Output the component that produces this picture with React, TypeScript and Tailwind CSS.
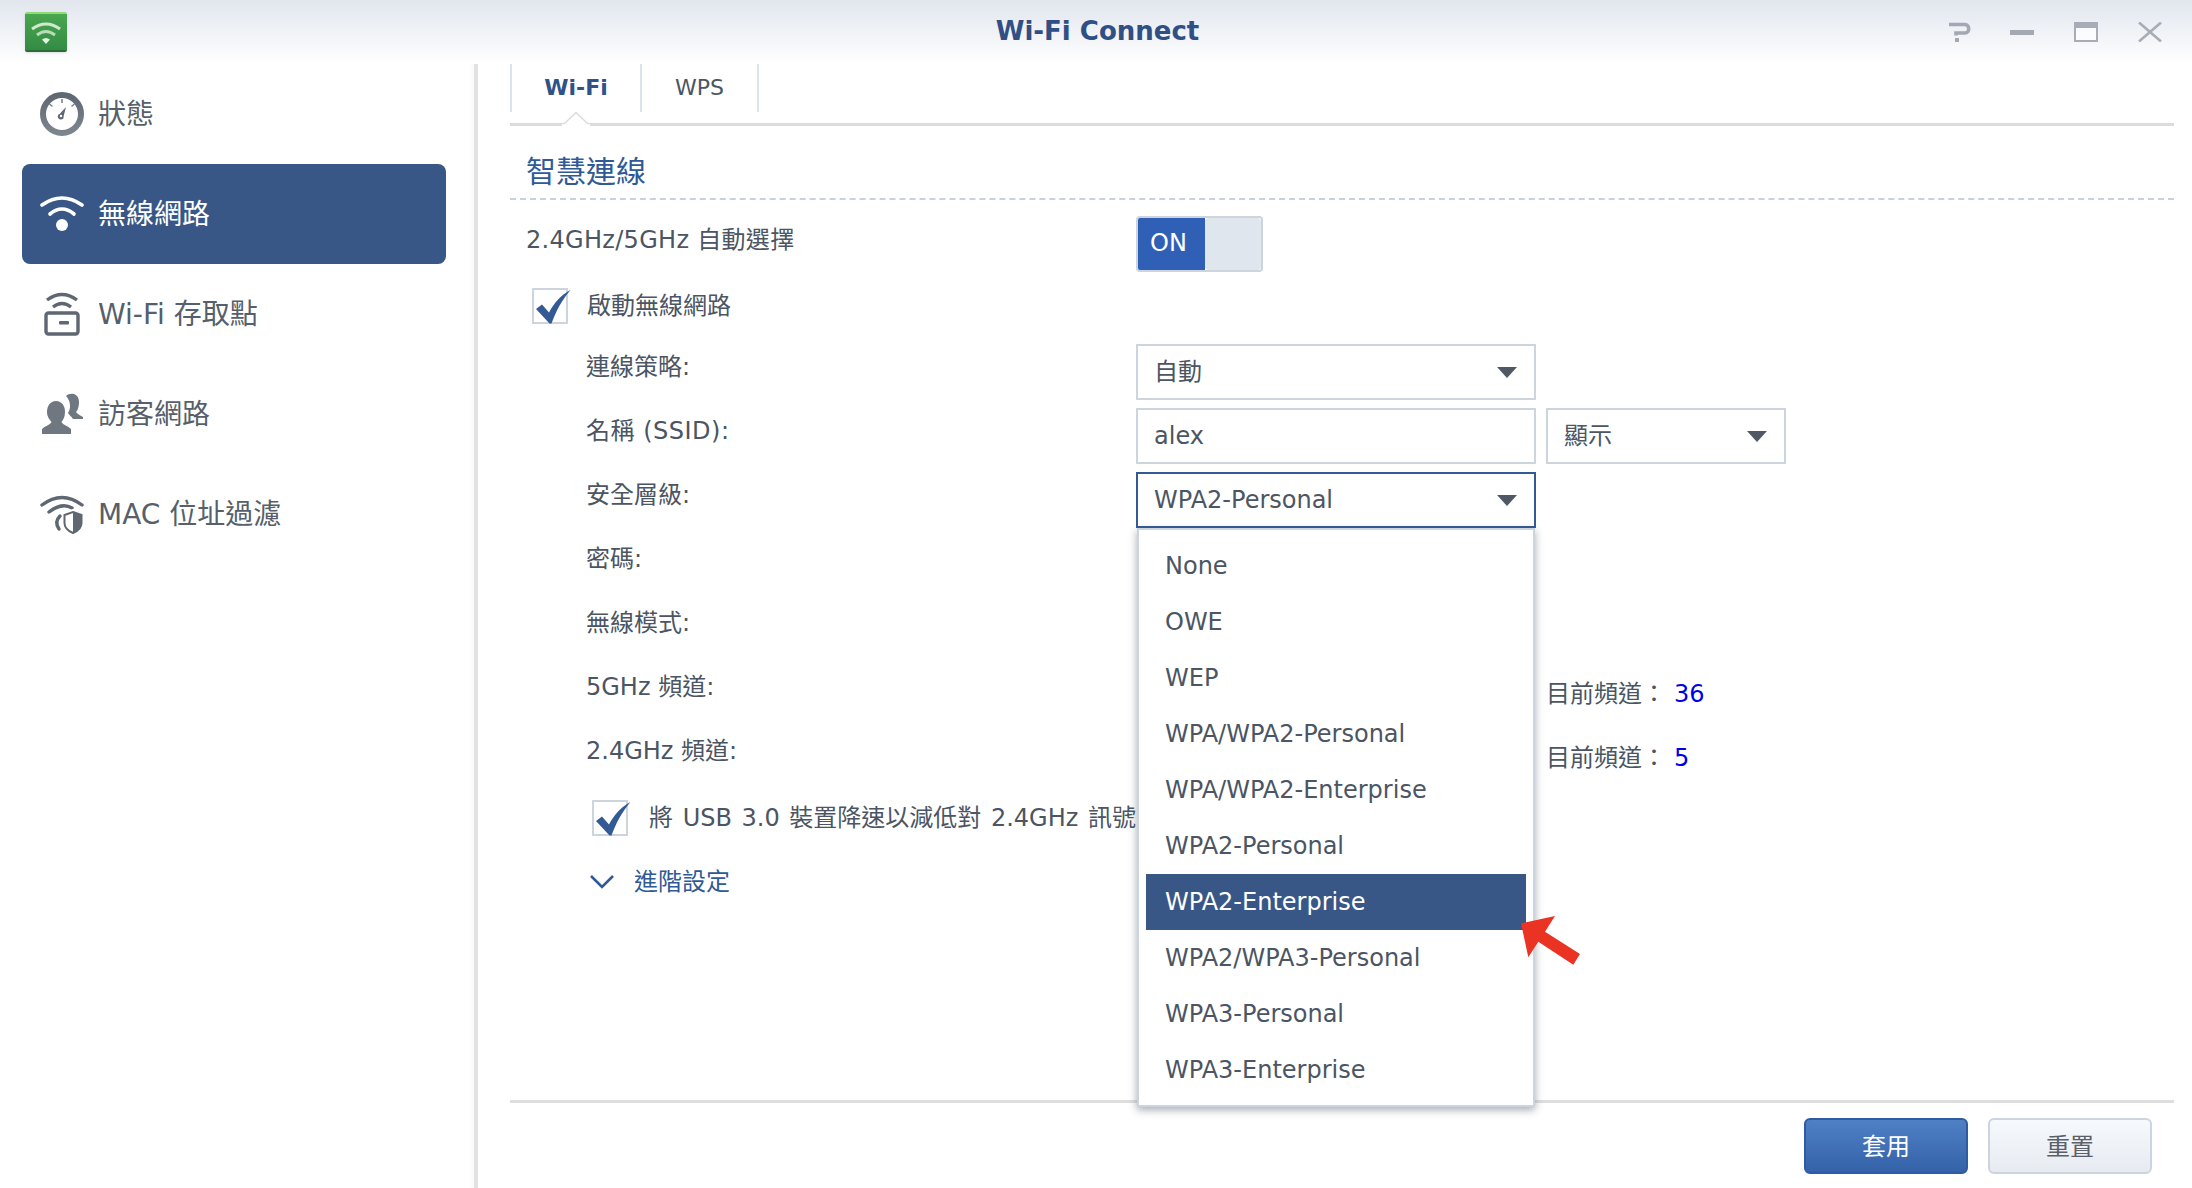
import React from "react";

const Caret = () => (
  <svg width="20" height="11" viewBox="0 0 20 11" className="shrink-0">
    <path d="M0 0H20L10 11Z" fill="#4f5863" />
  </svg>
);

const Check = () => (
  <svg width="40" height="40" viewBox="0 0 40 40" className="absolute left-0 top-[-2px]">
    <path d="M4 23L10 18.5L17 26.5C22 17 29 9 38.5 4C30 14 24 25 19.5 37.5H17.5Z" fill="#345a96" />
  </svg>
);

const CheckBox = () => (
  <div className="relative h-9 w-9 shrink-0 border-2 border-[#ccd4de] bg-white">
    <div className="absolute left-[-2px] top-[-2px] h-9 w-9">
      <Check />
    </div>
  </div>
);

const GaugeIcon = () => (
  <svg width="44" height="44" viewBox="0 0 44 44">
    <defs>
      <linearGradient id="g1" x1="0" y1="0" x2="0" y2="1">
        <stop offset="0" stopColor="#5f6772" />
        <stop offset="1" stopColor="#7d858f" />
      </linearGradient>
    </defs>
    <circle cx="22" cy="22" r="19" fill="none" stroke="url(#g1)" strokeWidth="6" />
    <path d="M22 7V11M9.5 12L12.5 14.5M34.5 12L31.5 14.5" stroke="#7d858f" strokeWidth="1.6" />
    <path d="M26 15L23.6 24.2A2.9 2.9 0 1 1 19.6 22Z" fill="#5f6772" />
    <circle cx="21" cy="24" r="1.2" fill="#fff" />
  </svg>
);

const WifiIcon = () => (
  <svg width="44" height="44" viewBox="0 0 44 44">
    <g fill="none" stroke="#fff" strokeWidth="3.6" strokeLinecap="round">
      <path d="M2 13Q22 -1 42 13" />
      <path d="M10 22Q22 12 34 22" />
    </g>
    <circle cx="22" cy="33" r="6" fill="#fff" />
  </svg>
);

const ApIcon = () => (
  <svg width="44" height="44" viewBox="0 0 44 44">
    <g fill="none" stroke="#5f6772" strokeWidth="3.4">
      <path d="M7 8Q22 -3 37 8" />
      <path d="M13 15Q22 8 31 15" />
      <rect x="6" y="21" width="32" height="21" rx="2.5" />
    </g>
    <rect x="19" y="29" width="10" height="3.5" rx="1" fill="#5f6772" />
  </svg>
);

const GuestIcon = () => (
  <svg width="44" height="44" viewBox="0 0 44 44">
    <path d="M26 4C30 0 39 1 39 10C39 14 38 18 36 20C37 22 40 23 43 25V27H33C31 24 29 23 28 21C31 17 31 9 26 4Z" fill="#6f7781" />
    <path d="M16 9C22 9 25 14 25 20C25 25 23 28 21.5 30C23 33 28 34 31 37V42H2V37C5 34 10 33 11.5 30C10 28 7 25 7 20C7 14 10 9 16 9Z" fill="#6f7781" />
  </svg>
);

const MacIcon = () => (
  <svg width="44" height="44" viewBox="0 0 44 44">
    <g fill="none" stroke="#5f6772" strokeWidth="3.4" strokeLinecap="round">
      <path d="M2 13Q22 -2 42 13" />
      <path d="M9 20Q22 10 32 16" />
      <path d="M19 37Q14 30 20 24" />
    </g>
    <path d="M33 17L44 21V31C44 37 39 41 33 43C27 41 22 37 22 31V21Z" fill="#fff" />
    <path d="M33 20L41.5 23V31C41.5 36 38 39 33 41C28 39 24.5 36 24.5 31V23Z" fill="none" stroke="#5f6772" strokeWidth="2" />
    <path d="M33 20L41.5 23V31C41.5 36 38 39 33 41Z" fill="#5f6772" />
  </svg>
);

const Logo = () => (
  <div className="flex h-10 w-[42px] items-center justify-center rounded-[2px] border-t-2 border-b-2 border-t-[#8fdc72] border-b-[#2c6b35] bg-gradient-to-b from-[#4aa650] to-[#338c44] shadow-sm">
    <svg width="30" height="24" viewBox="0 0 30 24">
      <g fill="none" stroke="#cfe9cc" strokeWidth="3">
        <path d="M1 9Q15 -1 29 9" />
        <path d="M6 15Q15 8 24 15" opacity="0.85" />
      </g>
      <path d="M11 19.5Q15 16.5 19 19.5L15 24Z" fill="#e4f3e2" />
    </svg>
  </div>
);

const WindowControls = () => (
  <div className="flex items-center">
    <svg width="24" height="20" viewBox="0 0 24 20" className="mr-[38px]">
      <path d="M1 2.5H17C22 2.5 22 11 17 11H8V13.5" fill="none" stroke="#a3a8b3" strokeWidth="3.5" />
      <rect x="7" y="16" width="4" height="4" fill="#a3a8b3" />
    </svg>
    <div className="mr-10 h-[5px] w-6 bg-[#a3a8b3]" />
    <div className="mr-10 flex h-5 w-6 flex-col border-2 border-t-[6px] border-[#a7acb7] bg-white/70" />
    <svg width="24" height="20" viewBox="0 0 24 20">
      <path d="M1 0.5L23 19.5M23 0.5L1 19.5" stroke="#a7acb7" strokeWidth="2.6" />
    </svg>
  </div>
);

const nav = [
  { label: "狀態", icon: <GaugeIcon /> },
  { label: "無線網路", icon: <WifiIcon />, active: true },
  { label: "Wi-Fi 存取點", icon: <ApIcon /> },
  { label: "訪客網路", icon: <GuestIcon /> },
  { label: "MAC 位址過濾", icon: <MacIcon /> },
];

const options = [
  "None",
  "OWE",
  "WEP",
  "WPA/WPA2-Personal",
  "WPA/WPA2-Enterprise",
  "WPA2-Personal",
  "WPA2-Enterprise",
  "WPA2/WPA3-Personal",
  "WPA3-Personal",
  "WPA3-Enterprise",
];

const Select = ({ value, width, focus }: { value: string; width: string; focus?: boolean }) => (
  <div
    className={`flex h-14 items-center justify-between border-2 bg-white pl-4 pr-[17px] ${width} ${
      focus ? "border-[#345a96]" : "border-[#ccd4de]"
    }`}
  >
    <span>{value}</span>
    <Caret />
  </div>
);

const Row = ({ label, wide, children }: { label: string; wide?: boolean; children?: React.ReactNode }) => (
  <div className="flex h-14">
    <div className={`w-[626px] pt-[7px] pl-[76px] ${wide ? "tracking-[0.5px]" : ""}`}>{label}</div>
    {children}
  </div>
);

const Channel = ({ value }: { value: string }) => (
  <div className="ml-[410px] flex items-center pt-[4px]">
    <span>目前頻道：</span>
    <span className="ml-[8px] text-[#0000e6]">{value}</span>
  </div>
);

export default function App() {
  return (
    <div className="flex h-[1188px] w-[2192px] flex-col overflow-hidden bg-white text-[24px] leading-8 text-[#4b5563] [font-family:'DejaVu_Sans','Noto_Sans_CJK_TC',sans-serif]">
      <header className="relative flex h-16 shrink-0 items-center justify-between bg-gradient-to-b from-[#e1e6ee] to-[#ffffff] pr-[30px] pl-[25px]">
        <Logo />
        <div className="absolute inset-x-0 top-[15px] pl-[3px] text-center text-[26px] font-bold text-[#2f4f85]">Wi-Fi Connect</div>
        <WindowControls />
      </header>

      <div className="flex min-h-0 flex-1">
        <aside className="w-[478px] shrink-0 border-r-[4px] border-[#e2e2e2] pl-[22px] shadow-[inset_-6px_0_6px_-6px_rgba(0,0,0,0.06)]">
          {nav.map((item) => (
            <div
              key={item.label}
              className={`flex h-[100px] w-[424px] items-center gap-[14px] rounded-lg pl-[18px] text-[28px] ${
                item.active ? "bg-[#385787] text-white" : "text-[#565f6b]"
              }`}
            >
              {item.icon}
              <span className="pt-[2px]">{item.label}</span>
            </div>
          ))}
        </aside>

        <main className="ml-8 flex min-w-0 flex-1 flex-col pr-[18px]">
          <div className="relative flex h-[62px] shrink-0 border-b-[3px] border-[#dcdcdc] text-[22px]">
            <div className="mb-[11px] flex w-[132px] items-center justify-center border-x-2 border-[#dde3ec] font-bold text-[#2f5288]">Wi-Fi</div>
            <div className="mb-[11px] flex w-[117px] items-center justify-center border-r-2 border-[#dde3ec]">WPS</div>
            <svg width="28" height="14" viewBox="0 0 28 14" className="absolute left-[52px] bottom-[-3px]">
              <path d="M0 12H2L14 0L26 12H28V14H0Z" fill="#fff" />
              <path d="M1 11.5H2.5L14 0.5L25.5 11.5H27" fill="none" stroke="#dcdcdc" strokeWidth="1.5" />
            </svg>
          </div>

          <div className="h-[74px] shrink-0 border-b-2 border-dashed border-[#c9d1dc] pt-[26px] pl-4 text-[30px] leading-10 text-[#2f5a96]">智慧連線</div>

          <div className="mt-4 flex h-14 shrink-0">
            <div className="w-[626px] pl-4 pt-[8px] tracking-[0.3px]">2.4GHz/5GHz 自動選擇</div>
            <div className="flex w-[127px] overflow-hidden rounded-[4px] border-2 border-[#ccd4de]">
              <div className="flex w-[67px] items-center justify-center bg-[#2f60b5] pr-[6px] pb-[2px] text-white">ON</div>
              <div className="flex-1 rounded-[4px] bg-[#e0e6ee]" />
            </div>
          </div>

          <div className="mt-4 flex h-9 shrink-0 items-center gap-[19px] pl-[22px]">
            <CheckBox />
            <span>啟動無線網路</span>
          </div>

          <div className="mt-5 flex shrink-0 flex-col gap-2">
            <Row label="連線策略:">
              <Select value="自動" width="w-[400px]" />
            </Row>
            <Row label="名稱 (SSID):" wide>
              <div className="flex h-14 w-[400px] items-center border-2 border-[#ccd4de] pl-4">alex</div>
              <div className="ml-[10px]">
                <Select value="顯示" width="w-[240px]" />
              </div>
            </Row>
            <Row label="安全層級:">
              <div className="relative z-10">
                <Select value="WPA2-Personal" width="w-[400px]" focus />
                <div className="absolute left-[1px] top-14 h-[579px] w-[398px] border-2 border-[#ccd4de] bg-white pt-2 pb-[7px] shadow-[0_3px_8px_rgba(60,70,90,0.45)]">
                  {options.map((option) => (
                    <div
                      key={option}
                      className={`mx-[7px] flex h-14 w-[380px] items-center pl-[19px] ${
                        option === "WPA2-Enterprise" ? "bg-[#385787] text-white" : ""
                      }`}
                    >
                      {option}
                    </div>
                  ))}
                  <svg width="70" height="70" viewBox="0 0 70 70" className="absolute left-[376px] top-[380px]">
                    <path d="M6 13.3L40 6L30 21.7L65 44L58.3 54.7L23.3 31.7L13.3 47.3Z" fill="#eb3323" />
                  </svg>
                </div>
              </div>
            </Row>
            <Row label="密碼:" />
            <Row label="無線模式:" />
            <Row label="5GHz 頻道:">
              <Channel value="36" />
            </Row>
            <Row label="2.4GHz 頻道:">
              <Channel value="5" />
            </Row>
          </div>

          <div className="mt-4 flex h-9 shrink-0 items-center gap-[21px] pl-[82px] whitespace-nowrap [word-spacing:2px]">
            <CheckBox />
            <span>將 USB 3.0 裝置降速以減低對 2.4GHz 訊號的干擾</span>
          </div>

          <div className="mt-[30px] flex h-8 shrink-0 items-center gap-[20px] pl-[80px] text-[#2f5a96]">
            <svg width="24" height="14" viewBox="0 0 24 14">
              <path d="M1 1L12 12L23 1" fill="none" stroke="#2f5a96" strokeWidth="2.6" />
            </svg>
            <span>進階設定</span>
          </div>

          <div className="mt-auto flex h-[88px] shrink-0 justify-end gap-5 border-t-[3px] border-[#dedede] pt-[15px] pr-[22px]">
            <button className="h-14 w-[164px] rounded-md border-2 border-[#2f5ba0] bg-gradient-to-b from-[#4f80c6] to-[#3562a8] pt-[2px] text-white">套用</button>
            <button className="h-14 w-[164px] rounded-md border-2 border-[#ccd5df] bg-gradient-to-b from-[#f6f9fd] to-[#e7ebf1] pt-[2px] text-[#5a6068]">重置</button>
          </div>
        </main>
      </div>
    </div>
  );
}
